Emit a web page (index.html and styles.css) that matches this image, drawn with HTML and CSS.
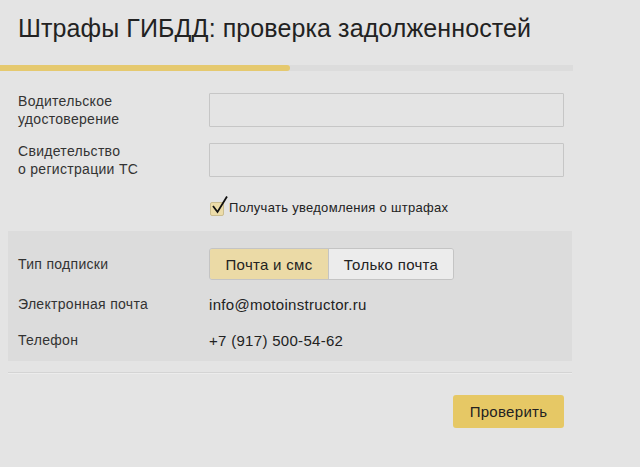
FILE: index.html
```html
<!DOCTYPE html>
<html lang="ru">
  <head>
    <meta charset="UTF-8" />
    <meta name="viewport" content="width=device-width, initial-scale=1.0" />
    <title>Штрафы ГИБДД</title>
    <link rel="stylesheet" href="styles.css">
  </head>
  <body>
    <div class="page">
      <h1 class="title">Штрафы ГИБДД: проверка задолженностей</h1>

      <div class="progress">
        <div class="progress-fill"></div>
      </div>

      <div class="form">
        <div class="row">
          <div class="label">Водительское<br />удостоверение</div>
          <input type="text" class="field" />
        </div>
        <div class="row">
          <div class="label">Свидетельство<br />о регистрации ТС</div>
          <input type="text" class="field" />
        </div>
        <div class="row check-row">
          <div class="label"></div>
          <label class="check">
            <span class="check-box">
              <svg class="check-mark" width="18" height="20" viewBox="0 0 18 20">
                <path d="M2 11 L6.5 17 L16 1.5" fill="none" stroke="#111" stroke-width="1.8" />
              </svg>
            </span>
            Получать уведомления о штрафах
          </label>
        </div>

        <div class="panel">
          <div class="row panel-row">
            <div class="label">Тип подписки</div>
            <div class="switch">
              <span class="switch-item active">Почта и смс</span>
              <span class="switch-item">Только почта</span>
            </div>
          </div>
          <div class="row info-row">
            <div class="label">Электронная почта</div>
            <div class="value">info@motoinstructor.ru</div>
          </div>
          <div class="row info-row">
            <div class="label">Телефон</div>
            <div class="value">+7 (917) 500-54-62</div>
          </div>
        </div>

        <div class="divider"></div>

        <div class="actions">
          <button class="button">Проверить</button>
        </div>
      </div>
    </div>
  </body>
</html>
```

FILE: styles.css
```css
body {
  margin: 0;
  background: #e4e4e4;
  color: #222;
  font-family: "Liberation Sans", Arial, sans-serif;
}
.page {
  width: 573px;
}
.title {
  margin: 0;
  padding: 14px 0 0 18px;
  font-size: 25px;
  line-height: 28px;
  letter-spacing: 0.1px;
  font-weight: normal;
  color: #222;
}
.progress {
  margin-top: 23px;
  height: 6px;
  background: #dcdcdc;
}
.progress-fill {
  width: 290px;
  height: 6px;
  background: #e5c96f;
  border-radius: 0 3px 3px 0;
}
.form {
  margin-top: 21px;
}
.row {
  display: flex;
  align-items: center;
  margin: 0 9px 14px 8px;
  padding-left: 10px;
}
.label {
  width: 191px;
  flex-shrink: 0;
  font-size: 14px;
  line-height: 18px;
  letter-spacing: 0.3px;
  color: #333;
}
.field {
  width: 355px;
  height: 34px;
  box-sizing: border-box;
  margin: 0;
  background: #e4e4e4;
  border: 1px solid #c6c6c6;
  border-radius: 1px;
}
.check-row {
  margin-top: 21px;
  margin-bottom: 14px;
}
.check {
  display: flex;
  align-items: center;
  font-size: 13px;
  line-height: 18px;
  letter-spacing: 0.3px;
  color: #222;
}
.check-box {
  position: relative;
  width: 14px;
  height: 14px;
  margin: 1px 5px 0 1px;
  box-sizing: border-box;
  background: #ecdca9;
  border: 1px solid #cbbd90;
  border-radius: 2px;
}
.check-mark {
  position: absolute;
  left: 0;
  top: -8px;
}
.panel {
  margin: 0 1px 0 8px;
  padding: 17px 0 3px;
  background: #dcdcdc;
}
.panel .row {
  margin: 0;
}
.panel-row {
  margin-bottom: 6px !important;
}
.info-row {
  height: 36px;
}
.value {
  font-size: 15px;
  letter-spacing: 0.3px;
  color: #222;
}
.switch {
  display: flex;
  height: 32px;
  box-sizing: border-box;
  border: 1px solid #c4c4c4;
  border-radius: 3px;
  overflow: hidden;
}
.switch-item {
  display: flex;
  align-items: center;
  justify-content: center;
  font-size: 15px;
  letter-spacing: 0.3px;
  background: #ececec;
  width: 124px;
}
.switch-item.active {
  width: 118px;
  background: #ebdaa6;
  border-right: 1px solid #c4c4c4;
}
.divider {
  margin: 11px 1px 0 8px;
  height: 1px;
  background: #d4d4d4;
  border-bottom: 1px solid #ececec;
}
.actions {
  display: flex;
  justify-content: flex-end;
  padding: 21px 9px 0 0;
}
.button {
  width: 111px;
  height: 33px;
  background: #e6c865;
  border: none;
  border-radius: 3px;
  font-family: "Liberation Sans", Arial, sans-serif;
  font-size: 15px;
  letter-spacing: 0.3px;
  color: #222;
}
```
